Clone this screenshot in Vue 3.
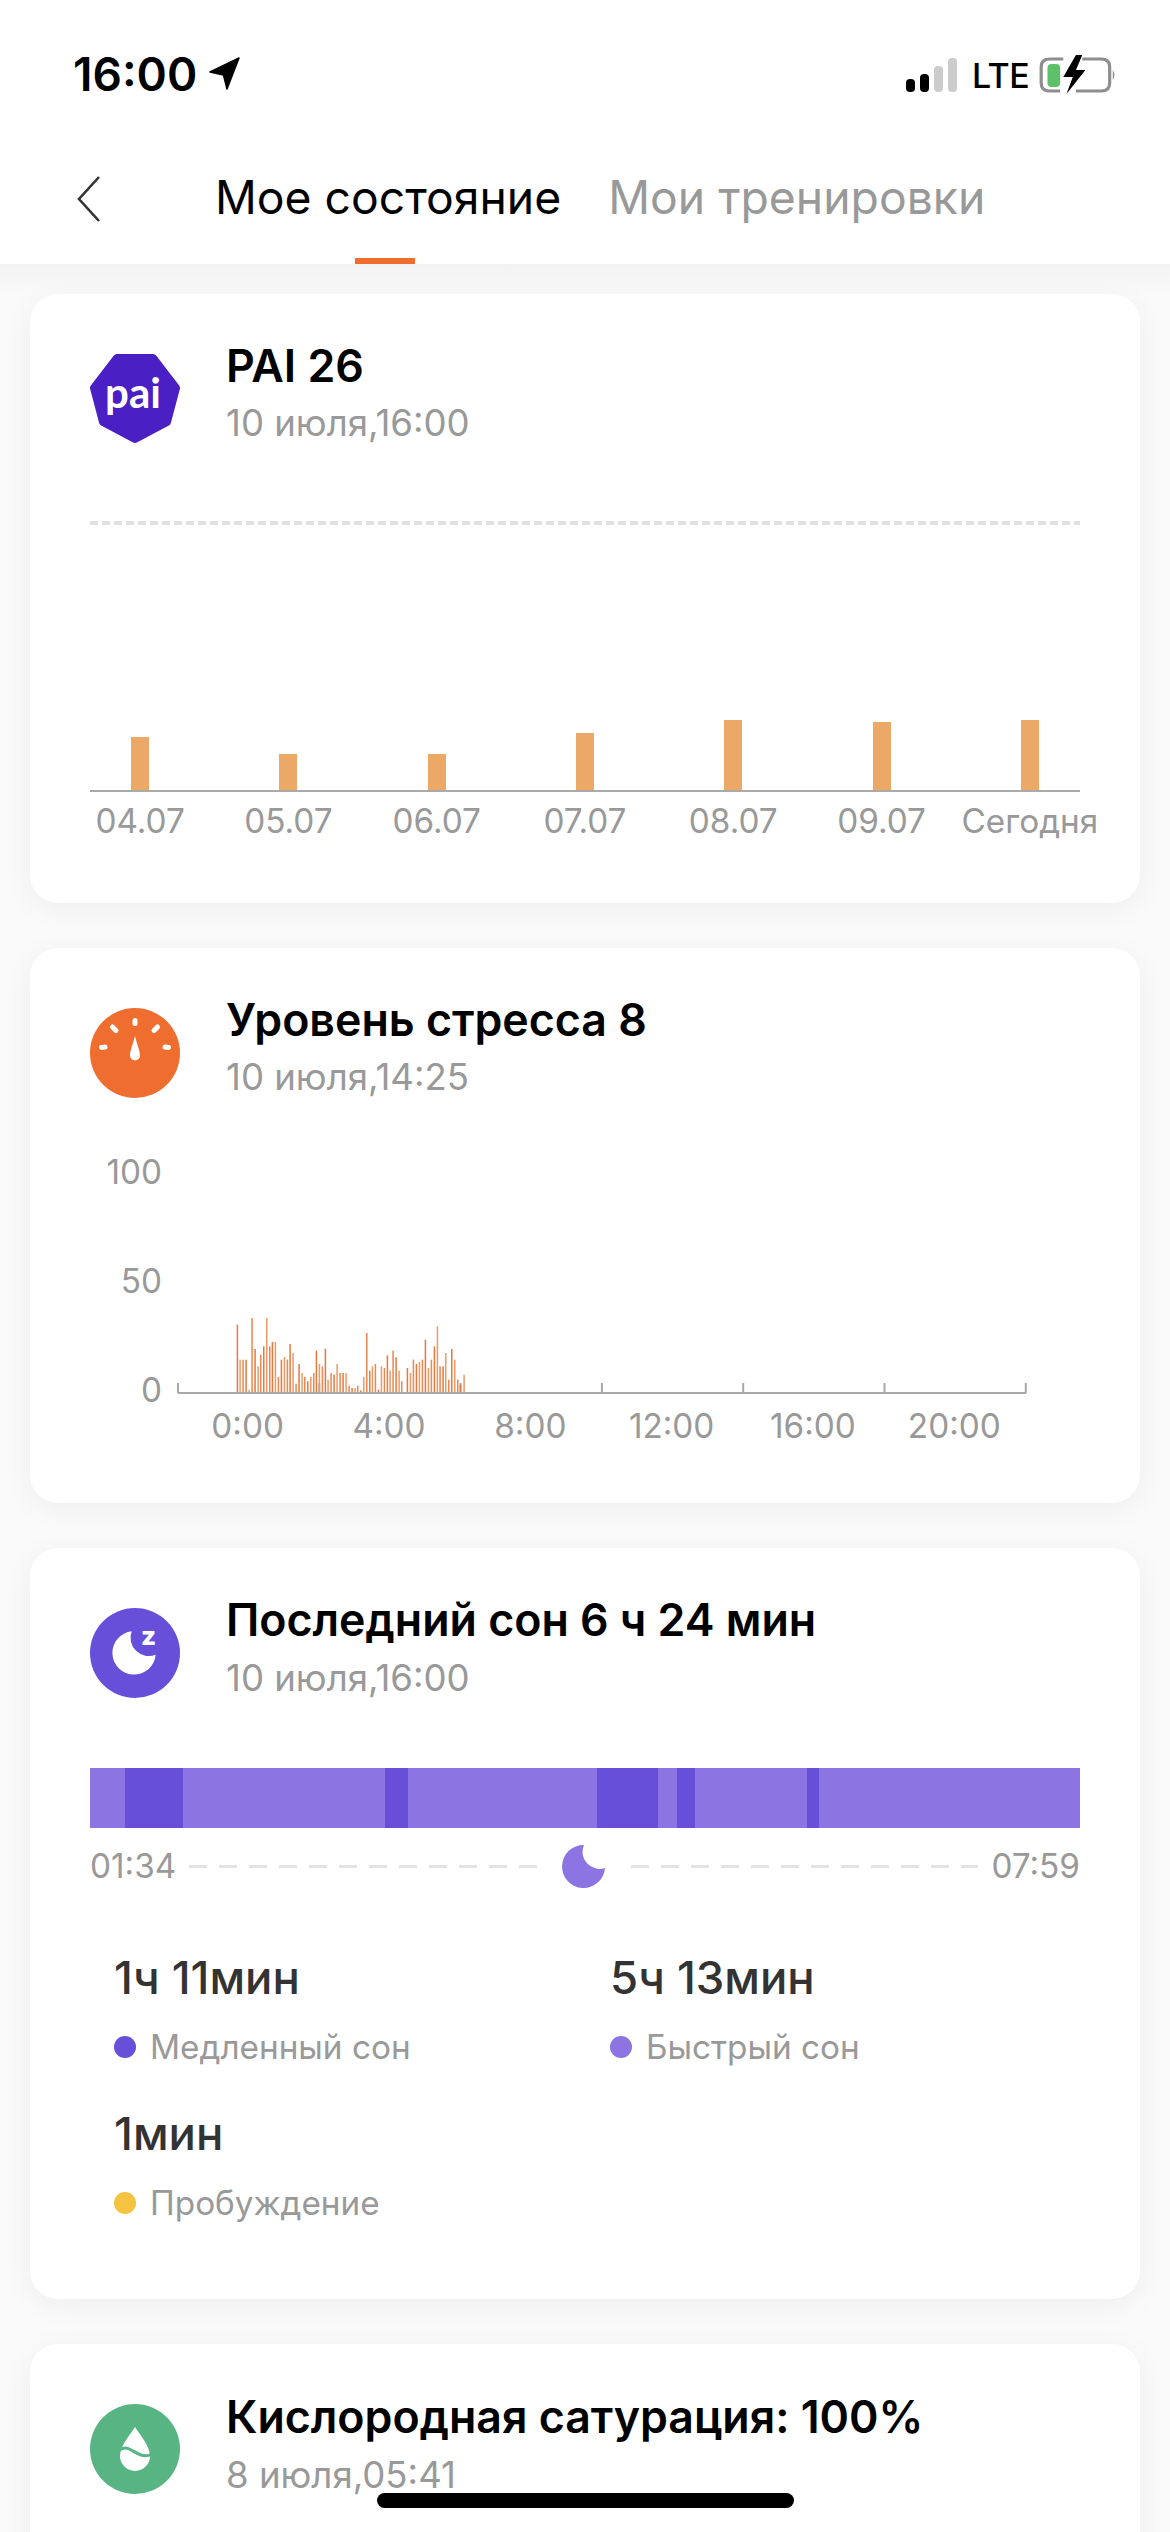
<script setup>
const paiBars = [
  { label: '04.07', h: 53 },
  { label: '05.07', h: 36 },
  { label: '06.07', h: 36 },
  { label: '07.07', h: 57 },
  { label: '08.07', h: 70 },
  { label: '09.07', h: 68 },
  { label: 'Сегодня', h: 70 }
]
const raw = [[110,75],[118,180],[127,180],[136,180],[145,270],[154,55],[163,148],[172,200],[180,165],[189,140],[198,55],[207,140],[215,127],[224,127],[233,232],[242,180],[251,172],[260,180],[268,133],[277,160],[286,252],[295,193],[304,220],[312,232],[321,245],[330,232],[339,220],[347,153],[356,193],[365,200],[374,147],[382,240],[391,220],[400,225],[409,193],[418,220],[427,220],[436,220],[445,258],[454,265],[463,265],[471,258],[480,272],[489,232],[498,100],[507,213],[515,200],[524,193],[533,270],[542,200],[551,205],[560,167],[568,213],[577,153],[586,173],[595,213],[603,245],[620,205],[629,220],[638,180],[647,193],[656,186],[665,180],[674,120],[683,205],[692,180],[701,140],[710,80],[718,200],[727,200],[735,160],[744,240],[753,148],[762,180],[771,240],[779,255],[790,225]]
const stress = raw.map(([zx, top], i) => ({
  x: 23 + zx / 3,
  h: (277 - top) / 3,
  c: i % 3 === 0 ? '#e47a3e' : i % 3 === 1 ? '#ee9a66' : '#e98850'
}))
const ticks = [0, 141.3, 282.6, 423.9, 565.2, 706.5, 847.8]
const hours = ['0:00', '4:00', '8:00', '12:00', '16:00', '20:00']
const segments = [
  [53, 'l'], [88, 'd'], [309, 'l'], [35, 'd'], [287, 'l'], [93, 'd'],
  [29, 'l'], [27, 'd'], [171, 'l'], [19, 'd'], [397, 'l']
]
const stats = [
  { value: '1ч 11мин', label: 'Медленный сон', color: '#674fd9' },
  { value: '5ч 13мин', label: 'Быстрый сон', color: '#8c74e3' },
  { value: '1мин', label: 'Пробуждение', color: '#f5c342' }
]
</script>

<template>
  <div class="page">
    <header class="header">
      <div class="status">
        <div class="status-left">
          <span class="time">16:00</span>
          <svg class="arrow" width="32" height="34" viewBox="0 0 32 34">
            <path d="M31 1 L2 15 L15.5 18 L19 32 Z" fill="#000" stroke="#000" stroke-width="1.5" stroke-linejoin="round" />
          </svg>
        </div>
        <div class="status-right">
          <div class="signal">
            <i class="sig s1"></i><i class="sig s2"></i><i class="sig s3"></i><i class="sig s4"></i>
          </div>
          <span class="lte">LTE</span>
          <svg class="battery" width="78" height="40" viewBox="0 0 74 40" preserveAspectRatio="none">
            <path d="M24 4 H11 Q3 4 3 12 V28 Q3 36 11 36 H21 M42 4 H60 Q68 4 68 12 V28 Q68 36 60 36 H36" fill="none" stroke="#8e8e8e" stroke-width="3" />
            <rect x="9" y="9" width="12" height="23" rx="4" fill="#5fc06a" />
            <path d="M36 0 L24 22 H33 L27 39 L45 15 H36 L42 0 Z" fill="#000" />
            <path d="M71 15 Q74 20 71 25 Z" fill="#8e8e8e" />
          </svg>
        </div>
      </div>
      <nav class="tabs">
        <svg class="back" width="26" height="48" viewBox="0 0 26 48">
          <path d="M23 2 L3 24 L23 46" fill="none" stroke="#333" stroke-width="2.6" />
        </svg>
        <div class="tab active">Мое состояние</div>
        <div class="tab">Мои тренировки</div>
      </nav>
    </header>

    <main class="content">
      <section class="card card-pai">
        <div class="head">
          <svg class="icon" width="90" height="90" viewBox="0 0 90 90">
            <path d="M27 4 H63 L86 34 L77 68 L45 85 L13 68 L4 34 Z" fill="#4a1fc4" stroke="#4a1fc4" stroke-width="8" stroke-linejoin="round" />
            <text x="43" y="54" text-anchor="middle" class="pai-text">pai</text>
          </svg>
          <div>
            <div class="title">PAI 26</div>
            <div class="date">10 июля,16:00</div>
          </div>
        </div>
        <div class="pai-dots"></div>
        <div class="pai-plot">
          <div class="pai-col" v-for="b in paiBars" :key="b.label">
            <div class="pai-bar" :style="{ height: b.h + 'px' }"></div>
          </div>
        </div>
        <div class="pai-labels">
          <div class="axis-text" v-for="b in paiBars" :key="b.label">{{ b.label }}</div>
        </div>
      </section>

      <section class="card card-stress">
        <div class="head">
          <svg class="icon" width="90" height="90" viewBox="0 0 90 90">
            <circle cx="45" cy="45" r="45" fill="#ee6d2f" />
            <g stroke="#fff" stroke-width="5" stroke-linecap="round">
              <path d="M45 12.5 V15.5" />
              <path d="M22.5 19 L26 22.5" />
              <path d="M67.5 19 L64 22.5" />
              <path d="M11.5 39.5 L15 39" />
              <path d="M78.5 39.5 L75 39" />
            </g>
            <path d="M45 28 C47 36 50 43 50 47.5 A5 5 0 0 1 40 47.5 C40 43 43 36 45 28 Z" fill="#fff" />
          </svg>
          <div>
            <div class="title">Уровень стресса 8</div>
            <div class="date">10 июля,14:25</div>
          </div>
        </div>
        <div class="stress-chart">
          <div class="y-axis">
            <div class="axis-text">100</div>
            <div class="axis-text">50</div>
            <div class="axis-text">0</div>
          </div>
          <div class="stress-plot">
            <svg width="850" height="256" viewBox="0 0 850 256">
              <path d="M1 250 H849" stroke="#a8a8a8" stroke-width="2" fill="none" />
              <path v-for="t in ticks" :key="t" :d="`M${t + 1} 240 V250`" stroke="#a8a8a8" stroke-width="2" fill="none" />
              <rect v-for="(b, i) in stress" :key="i" :x="b.x" :y="249 - b.h" width="1.5" :height="b.h" :fill="b.c" />
            </svg>
            <div class="hours">
              <div class="axis-text" v-for="h in hours" :key="h">{{ h }}</div>
            </div>
          </div>
        </div>
      </section>

      <section class="card card-sleep">
        <div class="head">
          <svg class="icon" width="90" height="90" viewBox="0 0 90 90">
            <circle cx="45" cy="45" r="45" fill="#674fd9" />
            <path d="M41.7 23.3 A21.7 21.7 0 1 0 65.7 46.7 A18.3 18.3 0 0 1 41.7 23.3 Z" fill="#fff" />
            <text x="58.5" y="37" text-anchor="middle" class="z-text">z</text>
          </svg>
          <div>
            <div class="title">Последний сон 6 ч 24 мин</div>
            <div class="date">10 июля,16:00</div>
          </div>
        </div>
        <div class="sleep-bar">
          <div
            v-for="(s, i) in segments"
            :key="i"
            class="seg"
            :class="s[1] === 'd' ? 'seg-dark' : 'seg-light'"
            :style="{ flexGrow: s[0] }"
          ></div>
        </div>
        <div class="timeline">
          <span class="axis-text">01:34</span>
          <div class="dash"></div>
          <svg class="moon" width="44" height="44" viewBox="0 0 44 44">
            <path d="M22 1 A21.5 21.5 0 1 0 43 24 A17 17 0 0 1 22 1 Z" fill="#8c74e3" />
          </svg>
          <div class="dash"></div>
          <span class="axis-text">07:59</span>
        </div>
        <div class="stats">
          <div class="stat" v-for="s in stats" :key="s.label">
            <div class="stat-value">{{ s.value }}</div>
            <div class="stat-label">
              <i class="dot" :style="{ background: s.color }"></i>
              <span>{{ s.label }}</span>
            </div>
          </div>
        </div>
      </section>

      <section class="card card-oxy">
        <div class="head">
          <svg class="icon" width="90" height="90" viewBox="0 0 90 90">
            <circle cx="45" cy="45" r="45" fill="#58b583" />
            <path d="M45 23 C50 31 60 42 60 52 A15 15 0 0 1 30 52 C30 42 40 31 45 23 Z" fill="#fff" />
            <path d="M28 47 C34 42 38 44 43 47 C48 50 54 54 62 50" fill="none" stroke="#58b583" stroke-width="3" />
          </svg>
          <div>
            <div class="title">Кислородная сатурация: 100%</div>
            <div class="date">8 июля,05:41</div>
          </div>
        </div>
      </section>
    </main>

    <div class="home-indicator"></div>
  </div>
</template>

<style scoped>
.page {
  position: relative;
  width: 1170px;
  height: 2532px;
  overflow: hidden;
  background: #fafafa;
  font-family: Inter, "Noto Sans", sans-serif;
}
.header {
  height: 264px;
  background: #fff;
  display: flex;
  flex-direction: column;
}
.status {
  height: 148px;
  padding: 50px 54px 0 73px;
  box-sizing: border-box;
  display: flex;
  justify-content: space-between;
  align-items: flex-start;
}
.status-left {
  display: flex;
  align-items: center;
  gap: 11px;
  height: 48px;
}
.time {
  font-size: 46px;
  font-weight: 600;
  color: #000;
  line-height: 48px;
}
.status-right {
  display: flex;
  align-items: center;
  height: 48px;
  margin-top: 1px;
}
.signal {
  display: flex;
  align-items: flex-end;
  gap: 5px;
  height: 34px;
}
.sig {
  display: block;
  width: 9px;
  border-radius: 4px;
}
.s1 { height: 13px; background: #000; }
.s2 { height: 18px; background: #000; }
.s3 { height: 26px; background: #ccc; }
.s4 { height: 34px; background: #ccc; }
.lte {
  font-size: 34px;
  font-weight: 500;
  margin-left: 15px;
  color: #000;
  width: 52px;
  letter-spacing: -0.5px;
}
.battery {
  margin-left: 14px;
}
.tabs {
  flex: 1;
  display: flex;
  align-items: flex-start;
  padding-left: 76px;
  position: relative;
}
.back {
  margin-top: 27px;
  margin-right: 113px;
}
.tab {
  font-size: 46.3px;
  line-height: 60px;
  margin-top: 19px;
  color: #999;
  margin-right: 47px;
  white-space: nowrap;
}
.tab.active {
  color: #000;
  position: relative;
}
.tab.active::after {
  content: "";
  position: absolute;
  left: 140px;
  width: 60px;
  height: 6px;
  top: 91px;
  background: #ee6d2f;
}
.content {
  padding: 30px 30px 0;
  background: linear-gradient(#f2f2f2, #fafafa 30px);
  display: flex;
  flex-direction: column;
  gap: 45px;
}
.card {
  background: #fff;
  border-radius: 28px;
  padding: 44px 60px 0;
  box-shadow: 0 6px 30px rgba(0, 0, 0, 0.05);
}
.head {
  display: flex;
  align-items: flex-start;
  gap: 46px;
  height: 113px;
}
.icon {
  margin-top: 16px;
  flex: none;
}
.title {
  font-size: 44.7px;
  line-height: 56px;
  font-weight: 600;
  color: #000;
  white-space: nowrap;
}
.date {
  font-size: 36.6px;
  line-height: 56px;
  margin-top: 1px;
  color: #999;
}
.card-sleep .date {
  margin-top: 2px;
}
.pai-text {
  font-family: Lato, Inter, sans-serif;
  font-size: 42px;
  font-weight: 700;
  fill: #fff;
}
.z-text {
  font-family: Inter, sans-serif;
  font-size: 26px;
  font-weight: 800;
  fill: #fff;
}
.card-pai {
  padding-bottom: 55px;
}
.pai-dots {
  margin-top: 70px;
  height: 4px;
  background: repeating-linear-gradient(90deg, #e0e0e0 0 8px, transparent 8px 12px);
}
.pai-plot {
  height: 265px;
  display: flex;
  margin-inline: -24px;
}
.pai-col {
  flex: 1 1 0;
  display: flex;
  justify-content: center;
  align-items: flex-end;
}
.pai-bar {
  width: 18px;
  background: #eca866;
}
.pai-labels {
  display: flex;
  margin: 0 -24px;
  padding-top: 4px;
  position: relative;
}
.pai-labels::before {
  content: "";
  position: absolute;
  left: 24px;
  right: 24px;
  top: 0;
  height: 2px;
  background: #aaa;
}
.pai-labels .axis-text {
  flex: 1 1 0;
  text-align: center;
}
.axis-text {
  font-size: 33.3px;
  line-height: 54px;
  color: #999;
  white-space: nowrap;
}
.card-stress {
  padding-bottom: 50px;
}
.stress-chart {
  display: flex;
  margin-top: 38px;
}
.y-axis {
  width: 72px;
  margin-top: 2px;
  margin-right: 15px;
  height: 272px;
  display: flex;
  flex-direction: column;
  justify-content: space-between;
  text-align: right;
}
.stress-plot {
  width: 850px;
}
.stress-plot svg {
  display: block;
}
.hours {
  display: flex;
  width: 848px;
}
.hours .axis-text {
  flex: 1 1 0;
  text-align: center;
}
.card-sleep {
  padding-bottom: 69px;
}
.sleep-bar {
  display: flex;
  height: 60px;
  margin-top: 63px;
}
.seg {
  flex-basis: 0;
  flex-shrink: 1;
}
.seg-light { background: #8c74e3; }
.seg-dark { background: #674fd9; }
.timeline {
  display: flex;
  align-items: center;
  margin-top: 11px;
  height: 54px;
  gap: 13px;
}
.dash {
  flex: 1;
  height: 3px;
  background: repeating-linear-gradient(90deg, #e4e4e4 0 18px, transparent 18px 30px);
}
.moon {
  margin: 0 12px;
}
.stats {
  display: grid;
  grid-template-columns: 496px 1fr;
  row-gap: 30px;
  padding-left: 24px;
  margin-top: 55px;
}
.stat-value {
  font-size: 45.5px;
  line-height: 60px;
  color: #333;
  font-weight: 450;
}
.stat-label {
  display: flex;
  align-items: center;
  gap: 14px;
  margin-top: 12px;
  font-size: 33.3px;
  line-height: 54px;
  color: #999;
}
.dot {
  width: 22px;
  height: 22px;
  border-radius: 50%;
  display: block;
}
.card-oxy {
  height: 300px;
  padding-top: 45px;
}
.card-oxy .date {
  margin-top: 2px;
}
.card-oxy .icon {
  margin-top: 15px;
}
.home-indicator {
  position: absolute;
  left: 377px;
  top: 2493px;
  width: 417px;
  height: 15px;
  border-radius: 8px;
  background: #000;
}
</style>
